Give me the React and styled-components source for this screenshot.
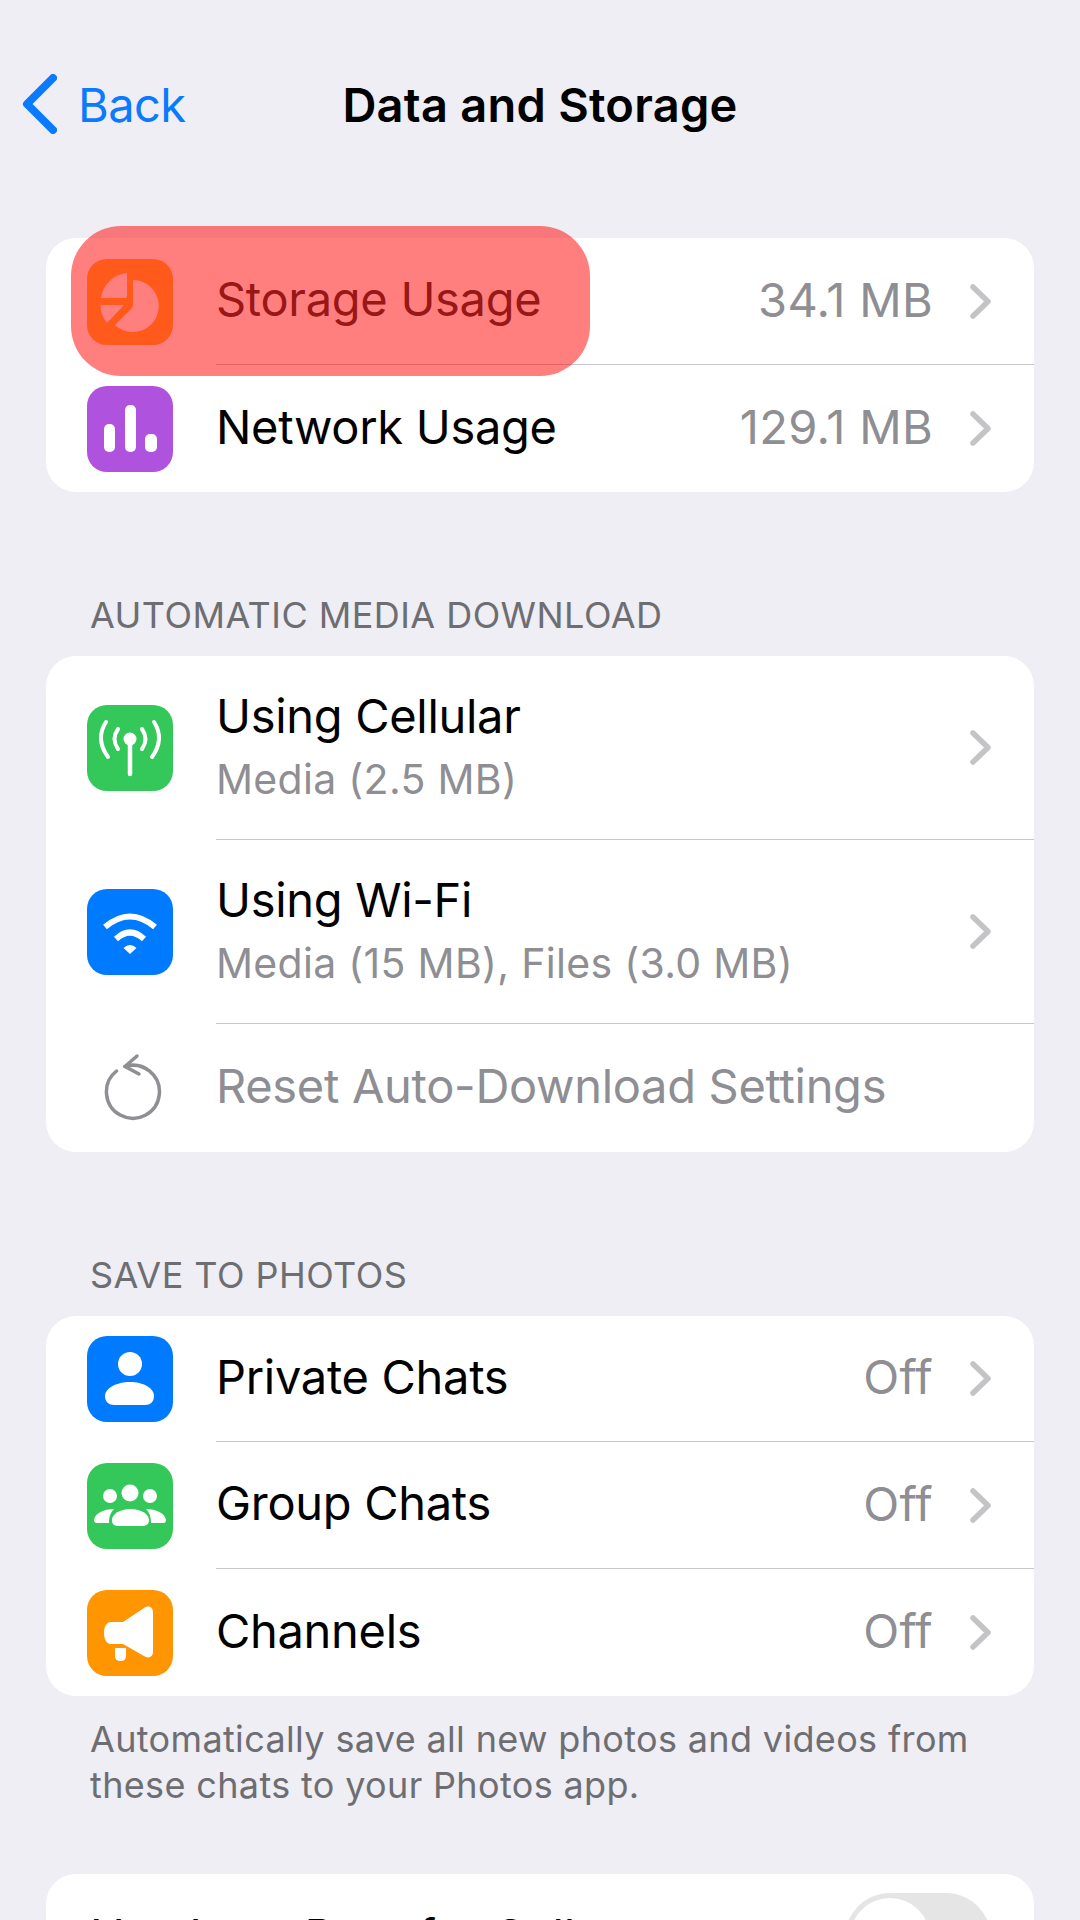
import React from 'react';
import styled, { createGlobalStyle } from 'styled-components';

const GlobalStyle = createGlobalStyle`
  html, body {
    margin: 0;
    padding: 0;
    background: #eeeef4;
  }
  body {
    font-family: Inter, "Liberation Sans", sans-serif;
    -webkit-font-smoothing: antialiased;
  }
`;

const Page = styled.div`
  width: 1080px;
  height: 1920px;
  overflow: hidden;
  background: #eeeef4;
`;

const Nav = styled.header`
  height: 208px;
  display: grid;
  grid-template-columns: 1fr auto 1fr;
  align-items: center;
`;

const BackButton = styled.div`
  display: flex;
  align-items: center;
  gap: 21px;
  padding-left: 22px;
  color: #0a7aff;
  font-size: 47px;
  letter-spacing: -0.6px;
`;

const Title = styled.h1`
  margin: 0;
  color: #000;
  font-size: 47px;
  font-weight: 600;
  letter-spacing: 0.25px;
`;

const Content = styled.main`
  padding: 30px 46px 0;
`;

const Section = styled.section`
  & + & {
    margin-top: 69px;
  }
`;

const SectionLabel = styled.div`
  margin-bottom: 19px;
  padding: 32px 0 0 44px;
  height: 44px;
  line-height: 44px;
  color: #6d6d72;
  font-size: 36px;
  letter-spacing: 0.45px;
`;

const Card = styled.div`
  background: #fff;
  border-radius: 30px;
`;

const Row = styled.div`
  position: relative;
  display: flex;
  align-items: center;
  gap: 43px;
  padding-left: 41px;
`;

const IconTile = styled.div`
  flex: none;
  width: 86px;
  height: 86px;
  border-radius: 20px;
  background: ${(p) => p.$color};
  display: flex;
  svg {
    display: block;
  }
`;

const PlainIcon = styled.div`
  flex: none;
  width: 86px;
  display: flex;
  justify-content: center;
  padding-left: 4px;
  box-sizing: border-box;
`;

const RowBody = styled.div`
  flex: 1;
  min-width: 0;
  box-sizing: border-box;
  height: ${(p) => p.$height}px;
  display: flex;
  align-items: center;
  padding-left: ${(p) => p.$inset || 0}px;
  padding-right: 43px;
  border-bottom: ${(p) => (p.$last ? 'none' : '1.5px solid #c8c8cb')};
`;

const TextStack = styled.div`
  flex: 1;
  min-width: 0;
  margin-bottom: 4px;
`;

const RowTitle = styled.div`
  color: ${(p) => (p.$muted ? '#8e8e93' : p.$under ? '#303030' : '#000')};
  font-size: 47px;
  line-height: 58px;
  letter-spacing: -0.3px;
  white-space: nowrap;
`;

const RowSubtitle = styled.div`
  margin-top: 9px;
  color: #8e8e93;
  font-size: 41px;
  line-height: 50px;
  letter-spacing: 0.3px;
  white-space: nowrap;
`;

const RowValue = styled.div`
  margin-bottom: 4px;
  color: #8e8e93;
  font-size: 47px;
  letter-spacing: 0.3px;
  white-space: nowrap;
`;

const Chevron = styled.svg`
  flex: none;
  margin-left: 37px;
`;

const Footnote = styled.p`
  margin: 20px 0 -3px;
  padding: 0 44px;
  color: #6d6d72;
  font-size: 36px;
  line-height: 46px;
  letter-spacing: 0.35px;
`;

const Highlight = styled.div`
  position: absolute;
  left: 25px;
  top: -12px;
  width: 519px;
  height: 150px;
  border-radius: 50px;
  background: rgba(255, 0, 0, 0.5);
`;

const Toggle = styled.div`
  position: relative;
  flex: none;
  width: 146px;
  height: 90px;
  border-radius: 45px;
  background: #e5e5e6;
  &::after {
    content: '';
    position: absolute;
    left: 5px;
    top: 5px;
    width: 80px;
    height: 80px;
    border-radius: 50%;
    background: #fff;
  }
`;

const Glyph = ({ children }) => (
  <svg width="86" height="86" viewBox="0 0 86 86" fill="#fff">
    {children}
  </svg>
);

const PieIcon = () => (
  <Glyph>
    <path d="M40 14 A29 29 0 0 0 14 39 H38 Q40 39 40 37 Z" />
    <path d="M13.5 46 H37 L20 64 A29 29 0 0 1 13.5 46 Z" />
    <path d="M46 21 A26 26 0 1 1 28 66 L44 50 Q46 48 46 46 Z" />
  </Glyph>
);

const BarsIcon = () => (
  <Glyph>
    <rect x="17" y="38" width="11" height="28" rx="5" />
    <rect x="38" y="19" width="11" height="47" rx="5" />
    <rect x="58" y="48" width="12" height="18" rx="5" />
  </Glyph>
);

const AntennaIcon = () => (
  <Glyph>
    <circle cx="43" cy="34" r="6.5" />
    <path d="M43 36 V69" stroke="#fff" strokeWidth="4.5" strokeLinecap="round" />
    <g fill="none" stroke="#fff" strokeWidth="4" strokeLinecap="round">
      <path d="M31 24 Q24 34 31 44" />
      <path d="M55 24 Q62 34 55 44" />
      <path d="M19 17 Q8 34 21 52" />
      <path d="M67 17 Q78 34 65 52" />
    </g>
  </Glyph>
);

const WifiIcon = () => (
  <Glyph>
    <g fill="none" stroke="#fff" strokeWidth="6">
      <path d="M18 38 Q43 17 68 38" />
      <path d="M29 50 Q43 37 57 50" />
    </g>
    <path d="M36.5 59 Q43 53 49.5 59 L43 65 Z" />
  </Glyph>
);

const ResetIcon = () => (
  <svg width="60" height="70" viewBox="0 0 60 70" fill="none" stroke="#8e8e93" strokeWidth="3.5" strokeLinecap="round" strokeLinejoin="round">
    <path d="M23 13.5 A26.5 26.5 0 1 1 14.5 18" />
    <path d="M35 3 L23 13.5 L37 21" />
  </svg>
);

const PersonIcon = () => (
  <Glyph>
    <circle cx="43" cy="28" r="12" />
    <path d="M18 60 C18 52 30 46 43 46 C56 46 67 52 67 60 C67 66 63 69 58 69 H27 C22 69 18 66 18 60 Z" />
  </Glyph>
);

const GroupIcon = () => (
  <Glyph>
    <circle cx="43" cy="30" r="8.5" />
    <circle cx="23" cy="33" r="7" />
    <circle cx="63" cy="33" r="7" />
    <path d="M7 57 C8 50 17 46 27 46 C24 49 22 53 22 60 H10 C8 60 7 59 7 57 Z" />
    <path d="M79 57 C78 50 69 46 59 46 C62 49 64 53 64 60 H76 C78 60 79 59 79 57 Z" />
    <path d="M25 57 C25 51 33 46 43.5 46 C54 46 62 51 62 57 C62 61 59 63 56 63 H31 C27 63 25 61 25 57 Z" />
  </Glyph>
);

const MegaphoneIcon = () => (
  <Glyph>
    <path d="M24 32 H36 L57 18 C61 15 66 17 66 22 V62 C66 67 61 69 57 66 L36 54 H24 C20 54 17 50 17 43 C17 36 20 32 24 32 Z" />
    <path d="M28 58 H39 V66 Q39 71 33.5 71 Q28 71 28 66 Z" />
  </Glyph>
);

const ChevronRight = () => (
  <Chevron width="21" height="35" viewBox="0 0 21 35" fill="none" stroke="#c4c4c7" strokeWidth="5.5" strokeLinecap="round" strokeLinejoin="round">
    <path d="M3 3 L18 17.5 L3 32" />
  </Chevron>
);

const App = () => (
  <Page>
    <GlobalStyle />
    <Nav>
      <BackButton>
        <svg width="35" height="60" viewBox="0 0 35 60" fill="none" stroke="#0a7aff" strokeWidth="8" strokeLinecap="round" strokeLinejoin="round">
          <path d="M31 4 L5 30 L31 56" />
        </svg>
        Back
      </BackButton>
      <Title>Data and Storage</Title>
      <div />
    </Nav>
    <Content>
      <Section>
        <Card>
          <Row>
            <IconTile $color="#ffb438"><PieIcon /></IconTile>
            <RowBody $height={127}>
              <TextStack><RowTitle $under>Storage Usage</RowTitle></TextStack>
              <RowValue>34.1 MB</RowValue>
              <ChevronRight />
            </RowBody>
            <Highlight />
          </Row>
          <Row>
            <IconTile $color="#af52de"><BarsIcon /></IconTile>
            <RowBody $height={127} $last>
              <TextStack><RowTitle>Network Usage</RowTitle></TextStack>
              <RowValue>129.1 MB</RowValue>
              <ChevronRight />
            </RowBody>
          </Row>
        </Card>
      </Section>

      <Section>
        <SectionLabel>AUTOMATIC MEDIA DOWNLOAD</SectionLabel>
        <Card>
          <Row>
            <IconTile $color="#34c759"><AntennaIcon /></IconTile>
            <RowBody $height={184}>
              <TextStack>
                <RowTitle>Using Cellular</RowTitle>
                <RowSubtitle>Media (2.5 MB)</RowSubtitle>
              </TextStack>
              <ChevronRight />
            </RowBody>
          </Row>
          <Row>
            <IconTile $color="#007aff"><WifiIcon /></IconTile>
            <RowBody $height={184}>
              <TextStack>
                <RowTitle>Using Wi-Fi</RowTitle>
                <RowSubtitle>Media (15 MB), Files (3.0 MB)</RowSubtitle>
              </TextStack>
              <ChevronRight />
            </RowBody>
          </Row>
          <Row>
            <PlainIcon><ResetIcon /></PlainIcon>
            <RowBody $height={128} $last>
              <TextStack><RowTitle $muted>Reset Auto-Download Settings</RowTitle></TextStack>
            </RowBody>
          </Row>
        </Card>
      </Section>

      <Section>
        <SectionLabel>SAVE TO PHOTOS</SectionLabel>
        <Card>
          <Row>
            <IconTile $color="#007aff"><PersonIcon /></IconTile>
            <RowBody $height={126}>
              <TextStack><RowTitle>Private Chats</RowTitle></TextStack>
              <RowValue>Off</RowValue>
              <ChevronRight />
            </RowBody>
          </Row>
          <Row>
            <IconTile $color="#34c759"><GroupIcon /></IconTile>
            <RowBody $height={127}>
              <TextStack><RowTitle>Group Chats</RowTitle></TextStack>
              <RowValue>Off</RowValue>
              <ChevronRight />
            </RowBody>
          </Row>
          <Row>
            <IconTile $color="#ff9500"><MegaphoneIcon /></IconTile>
            <RowBody $height={127} $last>
              <TextStack><RowTitle>Channels</RowTitle></TextStack>
              <RowValue>Off</RowValue>
              <ChevronRight />
            </RowBody>
          </Row>
        </Card>
        <Footnote>Automatically save all new photos and videos from these chats to your Photos app.</Footnote>
      </Section>

      <Section>
        <Card>
          <Row>
            <RowBody $height={127} $inset={3} $last>
              <TextStack><RowTitle>Use Less Data for Calls</RowTitle></TextStack>
              <Toggle />
            </RowBody>
          </Row>
        </Card>
      </Section>
    </Content>
  </Page>
);

export default App;
